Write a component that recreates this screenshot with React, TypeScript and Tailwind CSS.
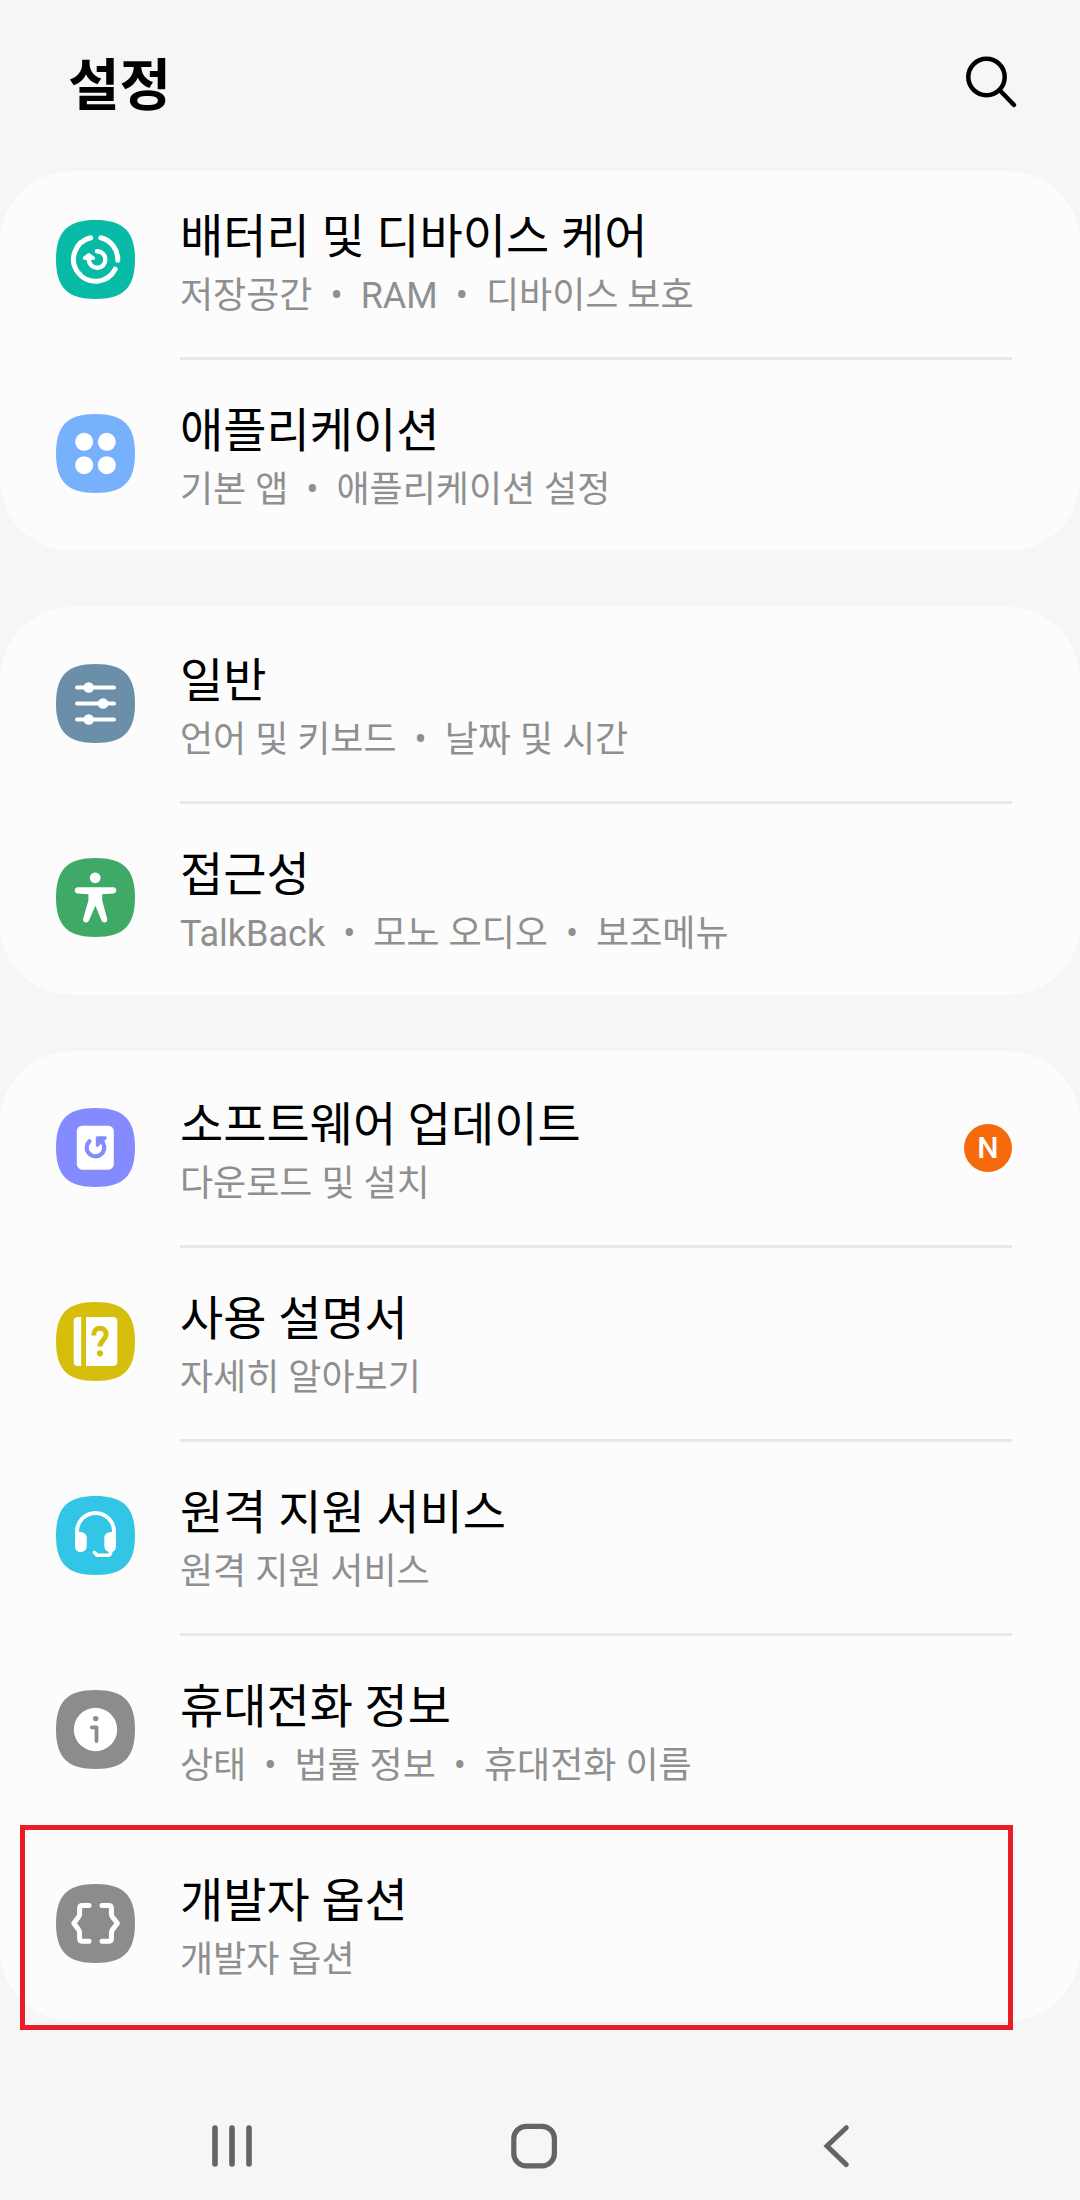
import type { ReactNode } from "react";

type Item = {
  title: string;
  summary: string[];
  color: string;
  icon: ReactNode;
  badge?: string;
  highlighted?: boolean;
};

const TILE = "M39.5 0C67.5 0 79 11.5 79 39.5S67.5 79 39.5 79 0 67.5 0 39.5 11.5 0 39.5 0Z";

const line = {
  fill: "none",
  strokeLinecap: "round" as const,
  strokeLinejoin: "round" as const,
};

const care = (
  <g {...line} stroke="#fff" strokeWidth="5">
    <path d="M59.2 49.2A22 22 0 1 1 34.7 17.8" />
    <path d="M44.8 17.8A22 22 0 0 1 61.7 40.3" />
    <path d="M41 31.2A8.3 8.3 0 1 1 32.8 40V36.5" strokeWidth="4.4" />
    <path d="M28.6 38.2 32.8 34.8 37.2 38.2Z" fill="#fff" strokeWidth="3.6" />
  </g>
);

const apps = (
  <g fill="#fff">
    <circle cx="28.2" cy="27.8" r="9" />
    <circle cx="50.8" cy="27.8" r="9" />
    <circle cx="28.2" cy="51.2" r="9" />
    <circle cx="50.8" cy="51.2" r="9" />
  </g>
);

const general = (
  <g fill="#fff">
    <path {...line} stroke="#fff" strokeWidth="4" d="M21 23.5H58M21 39.5H58M21 55.5H58" />
    <circle cx="32.7" cy="23.5" r="5.3" />
    <circle cx="47" cy="39.5" r="5.3" />
    <circle cx="32.7" cy="55.5" r="5.3" />
  </g>
);

const accessibility = (
  <g fill="#fff">
    <circle cx="39.2" cy="19.8" r="5.4" />
    <path d="M21.8 29.3H57.4C61.4 29.3 61.2 35.2 57.6 35.4L46.2 36.3V42.5L51.1 60.4C52.3 64.3 47.1 66.1 45.5 62.6L39.4 47.8 33 62.6C31.4 66.1 26 64.3 27.2 60.4L32.4 42.5V36.3L21.4 35.4C17.8 35 17.9 29.3 21.8 29.3Z" />
  </g>
);

const update = (
  <g>
    <rect x="20.8" y="17.7" width="37" height="44" rx="5.5" fill="#fff" />
    <path {...line} stroke="#848bff" strokeWidth="4.2" d="M33.4 33.2A8.8 8.8 0 1 0 47 35" />
    <path d="M41.3 29.8H49.3L41.3 37.3Z" fill="#848bff" stroke="#848bff" strokeWidth="3" strokeLinejoin="round" />
  </g>
);

const manual = (
  <g fill="#fff">
    <path d="M22.2 15H25.2V64H22.2Q17.7 64 17.7 59.5V19.5Q17.7 15 22.2 15Z" />
    <path d="M30 15H56.8Q61.3 15 61.3 19.5V59.5Q61.3 64 56.8 64H30Z" />
    <path
      {...line}
      stroke="#d6bf0c"
      strokeWidth="5"
      strokeLinecap="butt"
      d="M37.9 33.5V32C37.9 24.3 50.1 24.3 50.1 32.2C50.1 38 44 38.5 44 44.6"
    />
    <circle cx="44" cy="51.3" r="3.1" fill="#d6bf0c" />
  </g>
);

const headset = (
  <g fill="#fff">
    <path {...line} stroke="#fff" strokeWidth="4" d="M21 44V35.5A18.5 18.5 0 0 1 58 35.5V44" />
    <path d="M19 36H24Q30.8 36 30.8 42.5V49.5Q30.8 56 24.9 56Q19 56 19 50Z" />
    <path d="M60 36H55Q48.3 36 48.3 42.5V49.5Q48.3 56 54.1 56Q60 56 60 50Z" />
    <path {...line} stroke="#fff" strokeWidth="3.6" d="M38.4 56.4 41.2 59.3H51.5Q54.6 59.3 55 55" />
  </g>
);

const about = (
  <g>
    <circle cx="39.5" cy="39.5" r="21.7" fill="#fff" />
    <circle cx="39.7" cy="28.6" r="2.7" fill="#8c8c8c" />
    <path {...line} stroke="#8c8c8c" strokeWidth="3.8" d="M35.8 37.3H40.5V51" />
  </g>
);

const developer = (
  <g {...line} stroke="#fff" strokeWidth="5">
    <path d="M33 21.6H26.5Q23.6 21.6 23.6 24.5V30Q23.6 31.5 22.5 33L17.8 39.3 22.5 45.6Q23.6 47 23.6 48.6V54.5Q23.6 57.3 26.5 57.3H33" />
    <path d="M46 21.6H52.5Q55.4 21.6 55.4 24.5V30Q55.4 31.5 56.5 33L61.4 39.3 56.5 45.6Q55.4 47 55.4 48.6V54.5Q55.4 57.3 52.5 57.3H46" />
  </g>
);

const groups: Item[][] = [
  [
    { title: "배터리 및 디바이스 케어", summary: ["저장공간", "RAM", "디바이스 보호"], color: "#08bba7", icon: care },
    { title: "애플리케이션", summary: ["기본 앱", "애플리케이션 설정"], color: "#77b1fb", icon: apps },
  ],
  [
    { title: "일반", summary: ["언어 및 키보드", "날짜 및 시간"], color: "#6b8fa9", icon: general },
    { title: "접근성", summary: ["TalkBack", "모노 오디오", "보조메뉴"], color: "#3fa967", icon: accessibility },
  ],
  [
    { title: "소프트웨어 업데이트", summary: ["다운로드 및 설치"], color: "#848bff", icon: update, badge: "N" },
    { title: "사용 설명서", summary: ["자세히 알아보기"], color: "#d6bf0c", icon: manual },
    { title: "원격 지원 서비스", summary: ["원격 지원 서비스"], color: "#32c5e6", icon: headset },
    { title: "휴대전화 정보", summary: ["상태", "법률 정보", "휴대전화 이름"], color: "#8c8c8c", icon: about },
    { title: "개발자 옵션", summary: ["개발자 옵션"], color: "#8c8c8c", icon: developer, highlighted: true },
  ],
];

function SettingRow({ item, divided }: { item: Item; divided: boolean }) {
  return (
    <li className="relative">
      <button type="button" className="flex min-h-[194px] w-full items-stretch gap-[45px] pr-[68px] pl-14 text-left">
        <svg viewBox="0 0 79 79" className="mb-px size-[79px] shrink-0 self-center" aria-hidden="true">
          <path d={TILE} fill={item.color} />
          {item.icon}
        </svg>
        <span
          className={
            divided
              ? "flex flex-1 items-center justify-between border-y-[3px] border-t-[#e8e8e8] border-b-transparent"
              : "flex flex-1 items-center justify-between border-y-[3px] border-transparent"
          }
        >
          <span className="flex flex-col pt-1.5">
            <span className="text-[47px] leading-[66px] text-black">{item.title}</span>
            <span className="flex gap-[18px] text-[36px] leading-[52px] text-[#8f8f8f]">
              {item.summary.map((part, i) => (
                <span key={part} className="flex gap-[18px] whitespace-nowrap">
                  {i > 0 && <span>•</span>}
                  {part}
                </span>
              ))}
            </span>
          </span>
          {item.badge && (
            <span className="flex size-12 items-center justify-center rounded-full bg-[#f66a0c] text-[30px] leading-none font-medium text-white">
              {item.badge}
            </span>
          )}
        </span>
      </button>
      {item.highlighted && (
        <span className="pointer-events-none absolute -top-0.5 right-[67px] -bottom-[9px] left-5 border-[5px] border-[#ea1d26]" />
      )}
    </li>
  );
}

export default function App() {
  return (
    <div className="flex min-h-screen flex-col bg-[#f6f6f6] font-['Roboto','Noto_Sans_CJK_KR',sans-serif]">
      <header className="flex h-[171px] items-center justify-between pr-[61px] pl-[68px]">
        <h1 className="text-[56px] leading-[80px] font-bold text-black">설정</h1>
        <button type="button" aria-label="검색" className="mb-1">
          <svg viewBox="0 0 56 56" className="size-14" fill="none" stroke="#000" strokeWidth="4.5" strokeLinecap="round">
            <circle cx="23.5" cy="21" r="18.2" />
            <path d="M36.5 34 51 49" />
          </svg>
        </button>
      </header>

      <main className="flex flex-col gap-14">
        {groups.map((group, g) => (
          <ul
            key={g}
            className={g === 0 ? "overflow-hidden rounded-[72px] bg-[#fcfcfc]" : "rounded-[72px] bg-[#fcfcfc]"}
          >
            {g === 0 && <li aria-hidden="true" className="-mt-2" />}
            {group.map((item, i) => (
              <SettingRow key={item.title} item={item} divided={i > 0} />
            ))}
          </ul>
        ))}
      </main>

      <nav className="grid grid-cols-3 pt-[97px] pr-[93px] pb-6 pl-[81px]">
        <button type="button" aria-label="최근 앱" className="flex justify-center">
          <svg viewBox="0 0 56 56" className="size-14" fill="none" stroke="#646464" strokeWidth="5.6" strokeLinecap="round">
            <path d="M11 10V46M28 10V46M45 10V46" />
          </svg>
        </button>
        <button type="button" aria-label="홈" className="flex justify-center">
          <svg viewBox="0 0 56 56" className="size-14" fill="none" stroke="#646464" strokeWidth="5.2">
            <rect x="7.8" y="8.3" width="40.6" height="39.6" rx="12.5" />
          </svg>
        </button>
        <button type="button" aria-label="뒤로" className="flex justify-center">
          <svg viewBox="0 0 56 56" className="size-14" fill="none" stroke="#646464" strokeWidth="5" strokeLinecap="round">
            <path d="M38.3 9.7 19 28 38.3 46.6" />
          </svg>
        </button>
      </nav>
    </div>
  );
}
